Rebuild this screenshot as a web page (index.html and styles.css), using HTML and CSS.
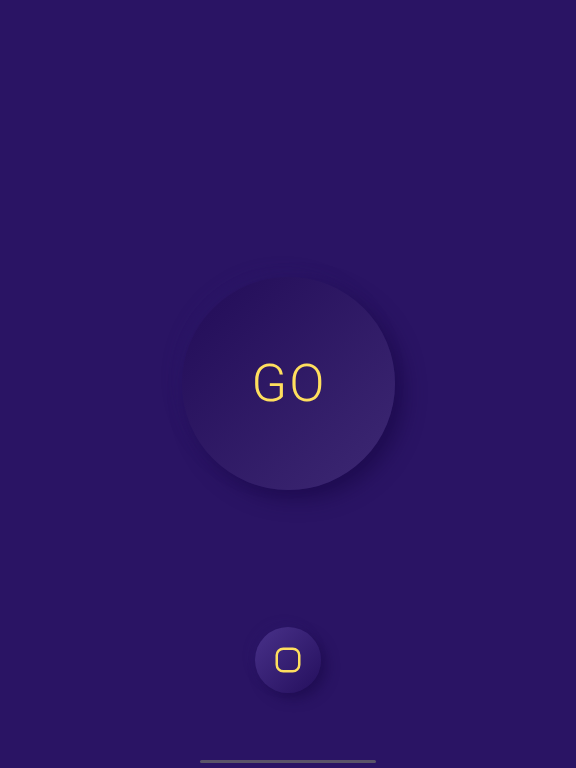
FILE: index.html
```html
<!DOCTYPE html>
<html lang="en">
<head>
    <meta charset="UTF-8">
    <meta name="viewport" content="width=device-width, initial-scale=1.0">
    <title>Go</title>
    <link rel="stylesheet" href="styles.css">
</head>
<body>
    <div class="screen">
        <button class="go-button">GO</button>
        <button class="stop-button">
            <svg class="stop-icon" width="26" height="26" viewBox="0 0 26 26">
                <rect x="1.75" y="1.75" width="22.5" height="22.5" rx="6.5" fill="none" stroke="#ffdf5e" stroke-width="2.5"/>
            </svg>
        </button>
        <div class="home-indicator"></div>
    </div>
</body>
</html>
```

FILE: styles.css
```css
body {
    margin: 0;
    background-color: #2a1464;
    font-family: Roboto, "Open Sans", sans-serif;
}
.screen {
    height: 768px;
    box-sizing: border-box;
    padding-top: 277px;
    display: flex;
    flex-direction: column;
    align-items: center;
    overflow: hidden;
}
button {
    border: none;
    padding: 0;
    border-radius: 50%;
    cursor: pointer;
    display: flex;
    align-items: center;
    justify-content: center;
    flex-shrink: 0;
}
.go-button {
    width: 213px;
    height: 213px;
    padding-left: 2px;
    background: linear-gradient(135deg, #26105c 15%, #39246f 85%);
    box-shadow: 9px 9px 20px rgba(24, 8, 70, 0.65), -6px -6px 16px rgba(52, 30, 115, 0.2);
    color: #ffdf5e;
    font-family: Roboto, sans-serif;
    font-size: 52px;
    font-weight: 300;
    letter-spacing: 2px;
}
.stop-button {
    width: 66px;
    height: 66px;
    margin-top: 137px;
    background: linear-gradient(135deg, #452e85 10%, #2a1464 85%);
    box-shadow: 6px 6px 12px rgba(24, 8, 70, 0.5), -4px -4px 10px rgba(52, 30, 115, 0.2);
}
.home-indicator {
    width: 176px;
    height: 3px;
    margin-top: 67px;
    background-color: #5a5568;
    border-radius: 2px;
    flex-shrink: 0;
}
```
